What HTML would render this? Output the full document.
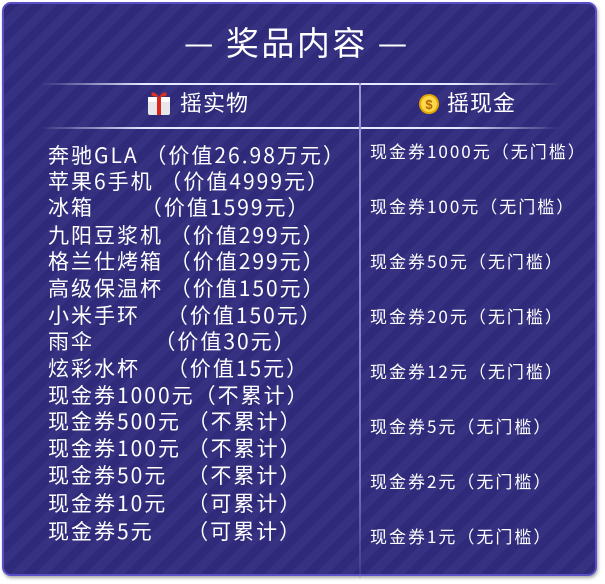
<!DOCTYPE html>
<html><head><meta charset="utf-8"><style>
html,body{margin:0;padding:0;width:605px;height:584px;background:#fff;overflow:hidden}
body{font-family:"Noto Sans CJK SC","Liberation Sans",sans-serif;color:#fff}
.card{position:absolute;left:2px;top:2px;width:595px;height:574px;border:2px solid #5a4fc6;border-radius:9px;box-sizing:border-box;
background:repeating-linear-gradient(-45deg,#2f2b7a 0 9px,#363181 9px 18px);box-shadow:1px 2px 3px rgba(0,0,0,.35)}
.t{position:absolute;white-space:pre;line-height:1}
.hl{position:absolute;height:2px;background:linear-gradient(90deg,rgba(200,200,240,0),#e8e8ff 20%,#e8e8ff 80%,rgba(200,200,240,0))}
.vl{position:absolute;left:359px;top:83px;width:2px;height:495px;background:linear-gradient(#9a96d8,#7a74c8 80%,rgba(120,110,200,.2))}
.l{font-size:21px;letter-spacing:2px}
.r{font-size:17px;letter-spacing:2px}
</style></head><body>
<div class="card"></div>
<div class="t" style="left:184px;top:25px;font-size:33px;letter-spacing:2.5px">— 奖品内容 —</div>
<div class="hl" style="left:40px;top:83px;width:520px"></div>
<div class="hl" style="left:40px;top:127px;width:520px"></div>
<div class="vl"></div>
<svg style="position:absolute;left:146px;top:88px" width="26" height="28" viewBox="0 0 26 28">
<rect x="2" y="9" width="22" height="18" rx="2" fill="#e8e8ea"/><rect x="2" y="9" width="22" height="5" fill="#fff"/>
<rect x="11" y="9" width="4" height="18" fill="#d8261c"/>
<path d="M13 9C8 2 4 4 6 8ZM13 9C18 2 22 4 20 8Z" fill="#e0301e"/></svg>
<div class="t" style="left:180px;top:91px;font-size:22px;letter-spacing:1px">摇实物</div>
<svg style="position:absolute;left:418px;top:93px" width="22" height="22" viewBox="0 0 22 22">
<circle cx="11" cy="11" r="10" fill="#e6a800"/><circle cx="11" cy="11" r="8" fill="#ffd84a"/>
<text x="11" y="16" font-size="13" text-anchor="middle" fill="#b06a00" font-family="Liberation Sans" font-weight="bold">$</text></svg>
<div class="t" style="left:447px;top:91px;font-size:22px;letter-spacing:1px">摇现金</div>

<div class="t l" style="left:48px;top:145px">奔驰GLA （价值26.98万元）</div>
<div class="t l" style="left:48px;top:171px">苹果6手机 （价值4999元）</div>
<div class="t l" style="left:48px;top:197px">冰箱       （价值1599元）</div>
<div class="t l" style="left:48px;top:225px">九阳豆浆机 （价值299元）</div>
<div class="t l" style="left:48px;top:251px">格兰仕烤箱 （价值299元）</div>
<div class="t l" style="left:48px;top:278px">高级保温杯 （价值150元）</div>
<div class="t l" style="left:48px;top:305px">小米手环    （价值150元）</div>
<div class="t l" style="left:48px;top:331px">雨伞         （价值30元）</div>
<div class="t l" style="left:48px;top:358px">炫彩水杯    （价值15元）</div>
<div class="t l" style="left:48px;top:385px">现金券1000元（不累计）</div>
<div class="t l" style="left:48px;top:411px">现金券500元 （不累计）</div>
<div class="t l" style="left:48px;top:438px">现金券100元 （不累计）</div>
<div class="t l" style="left:48px;top:465px">现金券50元   （不累计）</div>
<div class="t l" style="left:48px;top:493px">现金券10元   （可累计）</div>
<div class="t l" style="left:48px;top:521px">现金券5元     （可累计）</div>

<div class="t r" style="left:370px;top:142px">现金券1000元（无门槛）</div>
<div class="t r" style="left:370px;top:197px">现金券100元（无门槛）</div>
<div class="t r" style="left:370px;top:252px">现金券50元（无门槛）</div>
<div class="t r" style="left:370px;top:307px">现金券20元（无门槛）</div>
<div class="t r" style="left:370px;top:362px">现金券12元（无门槛）</div>
<div class="t r" style="left:370px;top:417px">现金券5元（无门槛）</div>
<div class="t r" style="left:370px;top:472px">现金券2元（无门槛）</div>
<div class="t r" style="left:370px;top:527px">现金券1元（无门槛）</div>
</body></html>
